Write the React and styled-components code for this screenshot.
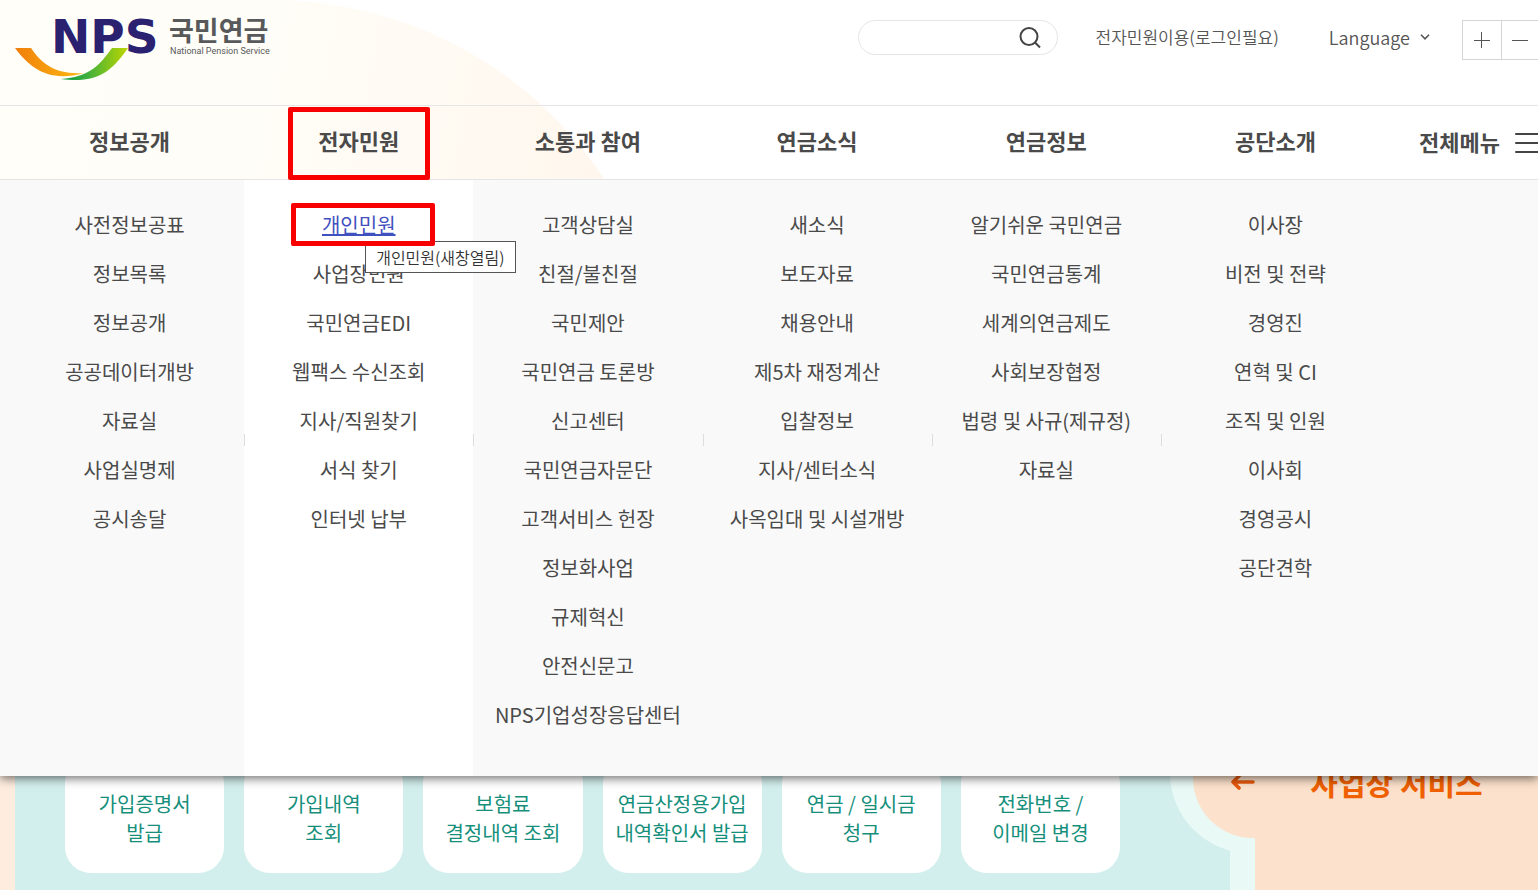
import React from "react";

import styled, { createGlobalStyle } from "styled-components";

const menus = [
  {
    title: "정보공개",
    items: ["사전정보공표", "정보목록", "정보공개", "공공데이터개방", "자료실", "사업실명제", "공시송달"],
  },
  {
    title: "전자민원",
    active: true,
    items: ["개인민원", "사업장민원", "국민연금EDI", "웹팩스 수신조회", "지사/직원찾기", "서식 찾기", "인터넷 납부"],
  },
  {
    title: "소통과 참여",
    items: [
      "고객상담실",
      "친절/불친절",
      "국민제안",
      "국민연금 토론방",
      "신고센터",
      "국민연금자문단",
      "고객서비스 헌장",
      "정보화사업",
      "규제혁신",
      "안전신문고",
      "NPS기업성장응답센터",
    ],
  },
  {
    title: "연금소식",
    items: ["새소식", "보도자료", "채용안내", "제5차 재정계산", "입찰정보", "지사/센터소식", "사옥임대 및 시설개방"],
  },
  {
    title: "연금정보",
    items: ["알기쉬운 국민연금", "국민연금통계", "세계의연금제도", "사회보장협정", "법령 및 사규(제규정)", "자료실"],
  },
  {
    title: "공단소개",
    items: ["이사장", "비전 및 전략", "경영진", "연혁 및 CI", "조직 및 인원", "이사회", "경영공시", "공단견학"],
  },
];

const services = [
  ["가입증명서", "발급"],
  ["가입내역", "조회"],
  ["보험료", "결정내역 조회"],
  ["연금산정용가입", "내역확인서 발급"],
  ["연금 / 일시금", "청구"],
  ["전화번호 /", "이메일 변경"],
];

export default function App() {
  return (
    <Page>
      <GlobalStyle />
      <Header>
        <Backdrop />
        <TopBar>
          <Logo />
          <Search role="search">
            <SearchInput type="text" aria-label="검색어" />
            <SearchButton type="button" aria-label="검색">
              <svg width="22" height="22" viewBox="0 0 22 22" fill="none" stroke="#444" strokeWidth="2">
                <circle cx="10" cy="9.500" r="8.5" />
                <path d="M16 15.500l5 5" />
              </svg>
            </SearchButton>
          </Search>
          <LoginLink href="#login">전자민원이용(로그인필요)</LoginLink>
          <Language type="button">
            Language
            <svg width="10" height="6" viewBox="0 0 10 6" fill="none" stroke="#555" strokeWidth="1.6">
              <path d="M1 .8l4 4 4-4" />
            </svg>
          </Language>
          <FontSize>
            <SizeButton type="button" aria-label="글자 크게">
              <svg width="16" height="16" viewBox="0 0 16 16" stroke="#555">
                <path d="M0 8.500h16M7.500 0v16" />
              </svg>
            </SizeButton>
            <SizeButton type="button" aria-label="글자 작게">
              <svg width="16" height="16" viewBox="0 0 16 16" stroke="#555">
                <path d="M0 8.500h16" />
              </svg>
            </SizeButton>
          </FontSize>
        </TopBar>
        <Nav>
          <Columns>
            {menus.map((menu) => (
              <NavItem key={menu.title}>
                <NavLink href="#menu">{menu.title}</NavLink>
                {menu.active && <NavMark />}
              </NavItem>
            ))}
          </Columns>
          <AllMenu type="button">
            <span>전체메뉴</span>
            <svg width="28" height="20" viewBox="0 0 28 20" stroke="#444" strokeWidth="2" strokeLinecap="round">
              <path d="M1 1h26M1 10h26M1 19h26" />
            </svg>
          </AllMenu>
        </Nav>
        <Dropdown>
          <Columns>
            {menus.map((menu, index) => (
              <SubMenu key={menu.title} $active={menu.active} $tick={index > 0}>
                {menu.items.map((item, row) => {
                  const current = menu.active && row === 0;
                  return (
                    <SubItem key={item}>
                      <SubLink href="#sub" $current={current}>
                        {item}
                      </SubLink>
                      {current && <Tooltip role="tooltip">개인민원(새창열림)</Tooltip>}
                      {current && <SubMark />}
                    </SubItem>
                  );
                })}
              </SubMenu>
            ))}
          </Columns>
        </Dropdown>
      </Header>
      <Main>
        <Personal>
          {services.map(([first, second]) => (
            <Card href="#service" key={first}>
              {first}
              <br />
              {second}
            </Card>
          ))}
        </Personal>
        <Business>
          <TabRing />
          <Tab type="button" aria-label="사업장 서비스 열기">
            <svg width="24" height="18" viewBox="0 0 24 18" fill="none" stroke="#e8590c" strokeWidth="3.6" strokeLinecap="round" strokeLinejoin="round">
              <path d="M22 9H3M9 2L2 9l6 6" />
            </svg>
          </Tab>
          <BusinessTitle>사업장 서비스</BusinessTitle>
        </Business>
      </Main>
    </Page>
  );
}

function Logo() {
  return (
    <LogoLink href="#home" aria-label="NPS 국민연금">
      <svg width="260" height="64" viewBox="0 0 260 64" overflow="visible">
        <defs>
          <linearGradient id="orange">
            <stop offset="0" stopColor="#f07f0a" />
            <stop offset="1" stopColor="#fdb913" />
          </linearGradient>
          <linearGradient id="green">
            <stop offset="0" stopColor="#0f9a48" />
            <stop offset="0.4" stopColor="#3fb03c" />
            <stop offset="1" stopColor="#bfd700" />
          </linearGradient>
        </defs>
        <text x="36" y="33" fontFamily="DejaVu Sans" fontWeight="700" fontSize="47" fill="#2b2171">
          NPS
        </text>
        <path d="M0 28h16C26 43 40 55 69 53C34 63 15 48 0 28z" fill="url(#orange)" />
        <path d="M46 59C74 57 84 46 97 28h16C94 56 78 63 46 59z" fill="url(#green)" />
        <text x="154" y="21" fontFamily="Noto Sans CJK KR" fontWeight="700" fontSize="27" fill="#58595b">
          국민연금
        </text>
        <text x="155" y="34" fontFamily="Roboto" fontSize="9" fill="#58595b">
          National Pension Service
        </text>
      </svg>
    </LogoLink>
  );
}

const GlobalStyle = createGlobalStyle`
  * {
    box-sizing: border-box;
  }

  body {
    margin: 0;
    color: #4a4a4a;
    font-family: "Noto Sans CJK KR", "Noto Sans", sans-serif;
  }

  a {
    color: inherit;
    text-decoration: none;
  }

  button {
    margin: 0;
    padding: 0;
    border: 0;
    background: none;
    color: inherit;
    font: inherit;
    cursor: pointer;
  }

  ul {
    margin: 0;
    padding: 0;
    list-style: none;
  }

  svg {
    display: block;
  }
`;

const Page = styled.div`
  overflow: hidden;
`;

const Header = styled.header`
  position: relative;
  z-index: 1;
  background: #fff;
`;

const Backdrop = styled.div`
  position: absolute;
  inset: 0;
  overflow: hidden;

  &::before {
    content: "";
    display: block;
    width: 670px;
    height: 800px;
    border-top-right-radius: 398px;
    background: linear-gradient(100deg, #fffef9 0%, #fffdf7 35%, #fff4e9 100%);
  }
`;

const TopBar = styled.div`
  position: relative;
  display: flex;
  align-items: flex-start;
  height: 106px;
  padding: 20px 0 0 15px;
  border-bottom: 1px solid #e5e5e5;
`;

const LogoLink = styled.a`
  margin-right: auto;
`;

const Search = styled.form`
  display: flex;
  align-items: center;
  width: 200px;
  height: 35px;
  padding: 0 16px;
  border: 1px solid #e5e5e5;
  border-radius: 18px;
  background: #fff;
`;

const SearchInput = styled.input`
  flex: 1;
  min-width: 0;
  border: 0;
  outline: 0;
  background: none;
  font: inherit;
`;

const SearchButton = styled.button`
  flex: none;
`;

const LoginLink = styled.a`
  margin-left: 38px;
  color: #555;
  font-size: 17px;
  font-weight: 350;
  line-height: 34px;
`;

const Language = styled.button`
  display: flex;
  align-items: center;
  gap: 10px;
  margin: 0 32px 0 50px;
  color: #555;
  font-size: 18px;
  font-weight: 350;
  line-height: 34px;
`;

const FontSize = styled.div`
  display: flex;
  height: 40px;
  border: 1px solid #d5d5d5;
  border-right: 0;
  background: #fff;
`;

const SizeButton = styled.button`
  display: flex;
  align-items: center;
  justify-content: center;
  width: 38px;

  & + & {
    width: 37px;
    border-left: 1px solid #d5d5d5;
  }
`;

const Nav = styled.nav`
  position: relative;
  display: flex;
  height: 74px;
  padding-left: 15px;
  border-bottom: 1px solid #e5e5e5;
`;

const Columns = styled.ul`
  flex: 1;
  display: grid;
  grid-template-columns: repeat(6, 1fr);
`;

const NavItem = styled.li`
  position: relative;
  display: flex;
  align-items: center;
  justify-content: center;
  padding-bottom: 5px;
`;

const NavLink = styled.a`
  font-size: 22px;
  font-weight: 700;
  line-height: 32px;
`;

const Mark = styled.span`
  position: absolute;
  border: 5px solid #f80000;
  border-radius: 2px;
  pointer-events: none;
`;

const NavMark = styled(Mark)`
  top: 1px;
  left: 44px;
  width: 142px;
  height: 73px;
`;

const AllMenu = styled.button`
  flex: none;
  display: flex;
  align-items: center;
  gap: 15px;
  width: 148px;
  padding-left: 29px;
  font-size: 22px;
  font-weight: 700;
  white-space: nowrap;

  span {
    padding-bottom: 4px;
  }

  svg {
    flex: none;
  }
`;

const Dropdown = styled.div`
  position: absolute;
  top: 100%;
  left: 0;
  right: 0;
  display: flex;
  padding: 0 148px 0 15px;
  background: #f9f9f9;
  box-shadow: 0 2px 10px rgba(0, 0, 0, 0.6);
  clip-path: inset(0 0 -20px 0);
`;

const SubMenu = styled.ul`
  padding: 20px 0 37px;
  background-color: ${(props) => (props.$active ? "#fff" : "transparent")};
  background-image: ${(props) => (props.$tick ? "linear-gradient(#ddd, #ddd)" : "none")};
  background-repeat: no-repeat;
  background-position: 0 254px;
  background-size: 1px 12px;
`;

const SubItem = styled.li`
  position: relative;
  display: flex;
  align-items: center;
  justify-content: center;
  height: 49px;
`;

const SubLink = styled.a`
  color: ${(props) => (props.$current ? "#3f51bf" : "inherit")};
  font-size: 20px;
  line-height: 29px;
  text-decoration: ${(props) => (props.$current ? "underline" : "none")};
`;

const SubMark = styled(Mark)`
  z-index: 2;
  top: 3px;
  left: 47px;
  width: 144px;
  height: 43px;
`;

const Tooltip = styled.span`
  position: absolute;
  z-index: 1;
  top: 41px;
  left: 121px;
  padding: 0 10px;
  border: 1px solid #555;
  background: #fff;
  color: #333;
  font-size: 16px;
  font-weight: 350;
  line-height: 30px;
  white-space: nowrap;
`;

const Main = styled.main`
  display: flex;
  min-height: calc(100vh - 180px);
  padding-left: 15px;
  background: #feecdf;
`;

const Personal = styled.section`
  flex: 1;
  display: grid;
  grid-template-columns: repeat(6, 1fr);
  gap: 20px;
  align-items: end;
  padding: 0 110px 17px 50px;
  border-right: 25px solid #e9f9f6;
  background: #d3efed;
`;

const Card = styled.a`
  padding: 32px 0 26px;
  border-radius: 26px;
  background: #fff;
  color: #158f7b;
  font-size: 20px;
  line-height: 29px;
  text-align: center;
  white-space: nowrap;
`;

const Business = styled.section`
  position: relative;
  display: flex;
  flex-direction: column;
  justify-content: flex-end;
  width: 283px;
  padding-bottom: 88px;
  background: #fce2cc;
`;

const TabRing = styled.span`
  position: absolute;
  left: -85px;
  bottom: 37px;
  width: 85px;
  height: 160px;
  border-radius: 80px 0 0 80px;
  background: #e9f9f6;
`;

const Tab = styled.button`
  position: absolute;
  left: -62px;
  bottom: 52px;
  display: flex;
  align-items: center;
  justify-content: flex-end;
  width: 62px;
  height: 120px;
  padding-top: 8px;
  border-radius: 60px 0 0 60px;
  background: #fce2cc;
`;

const BusinessTitle = styled.h2`
  margin: 0;
  color: #f06000;
  font-size: 30px;
  font-weight: 700;
  line-height: 40px;
  text-align: center;
`;
